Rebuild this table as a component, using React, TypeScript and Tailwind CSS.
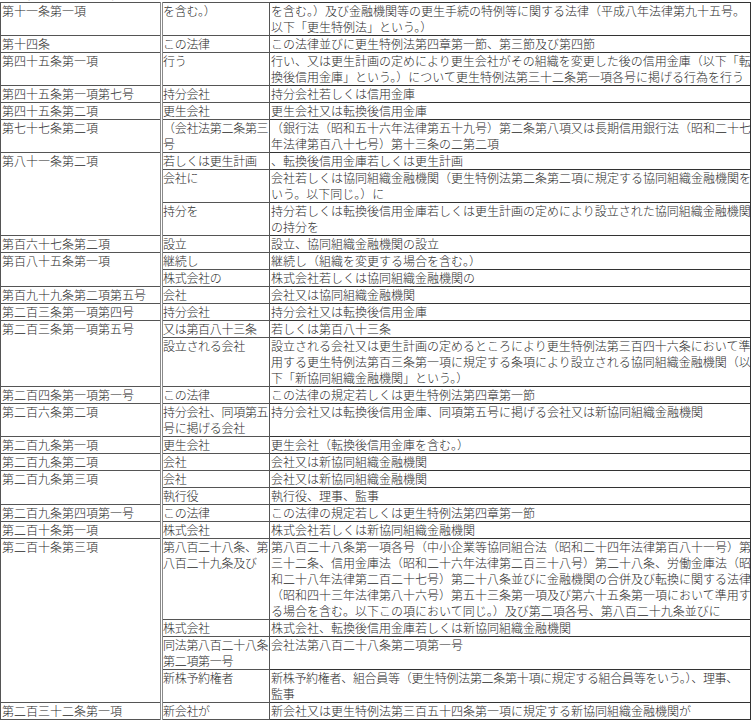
import React from "react";

type Row = { a?: string; span?: number; b: string[]; c: string[] };

const rows: Row[] = [
  { a: "第十一条第一項", b: ["を含む。）"], c: ["を含む。）及び金融機関等の更生手続の特例等に関する法律（平成八年法律第九十五号。", "以下「更生特例法」という。）"] },
  { a: "第十四条", b: ["この法律"], c: ["この法律並びに更生特例法第四章第一節、第三節及び第四節"] },
  { a: "第四十五条第一項", b: ["行う"], c: ["行い、又は更生計画の定めにより更生会社がその組織を変更した後の信用金庫（以下「転", "換後信用金庫」という。）について更生特例法第三十二条第一項各号に掲げる行為を行う"] },
  { a: "第四十五条第一項第七号", b: ["持分会社"], c: ["持分会社若しくは信用金庫"] },
  { a: "第四十五条第二項", b: ["更生会社"], c: ["更生会社又は転換後信用金庫"] },
  { a: "第七十七条第二項", b: ["（会社法第二条第三", "号"], c: ["（銀行法（昭和五十六年法律第五十九号）第二条第八項又は長期信用銀行法（昭和二十七", "年法律第百八十七号）第十三条の二第二項"] },
  { a: "第八十一条第二項", span: 3, b: ["若しくは更生計画"], c: ["、転換後信用金庫若しくは更生計画"] },
  { b: ["会社に"], c: ["会社若しくは協同組織金融機関（更生特例法第二条第二項に規定する協同組織金融機関を", "いう。以下同じ。）に"] },
  { b: ["持分を"], c: ["持分若しくは転換後信用金庫若しくは更生計画の定めにより設立された協同組織金融機関", "の持分を"] },
  { a: "第百六十七条第二項", b: ["設立"], c: ["設立、協同組織金融機関の設立"] },
  { a: "第百八十五条第一項", span: 2, b: ["継続し"], c: ["継続し（組織を変更する場合を含む。）"] },
  { b: ["株式会社の"], c: ["株式会社若しくは協同組織金融機関の"] },
  { a: "第百九十九条第二項第五号", b: ["会社"], c: ["会社又は協同組織金融機関"] },
  { a: "第二百三条第一項第四号", b: ["持分会社"], c: ["持分会社又は転換後信用金庫"] },
  { a: "第二百三条第一項第五号", span: 2, b: ["又は第百八十三条"], c: ["若しくは第百八十三条"] },
  { b: ["設立される会社"], c: ["設立される会社又は更生計画の定めるところにより更生特例法第三百四十六条において準", "用する更生特例法第百三条第一項に規定する条項により設立される協同組織金融機関（以", "下「新協同組織金融機関」という。）"] },
  { a: "第二百四条第一項第一号", b: ["この法律"], c: ["この法律の規定若しくは更生特例法第四章第一節"] },
  { a: "第二百六条第二項", b: ["持分会社、同項第五", "号に掲げる会社"], c: ["持分会社又は転換後信用金庫、同項第五号に掲げる会社又は新協同組織金融機関"] },
  { a: "第二百九条第一項", b: ["更生会社"], c: ["更生会社（転換後信用金庫を含む。）"] },
  { a: "第二百九条第二項", b: ["会社"], c: ["会社又は新協同組織金融機関"] },
  { a: "第二百九条第三項", span: 2, b: ["会社"], c: ["会社又は新協同組織金融機関"] },
  { b: ["執行役"], c: ["執行役、理事、監事"] },
  { a: "第二百九条第四項第一号", b: ["この法律"], c: ["この法律の規定若しくは更生特例法第四章第一節"] },
  { a: "第二百十条第一項", b: ["株式会社"], c: ["株式会社若しくは新協同組織金融機関"] },
  { a: "第二百十条第三項", span: 4, b: ["第八百二十八条、第", "八百二十九条及び"], c: ["第八百二十八条第一項各号（中小企業等協同組合法（昭和二十四年法律第百八十一号）第", "三十二条、信用金庫法（昭和二十六年法律第二百三十八号）第二十八条、労働金庫法（昭", "和二十八年法律第二百二十七号）第二十八条並びに金融機関の合併及び転換に関する法律", "（昭和四十三年法律第八十六号）第五十三条第一項及び第六十五条第一項において準用す", "る場合を含む。以下この項において同じ。）及び第二項各号、第八百二十九条並びに"] },
  { b: ["株式会社"], c: ["株式会社、転換後信用金庫若しくは新協同組織金融機関"] },
  { b: ["同法第八百二十八条", "第二項第一号"], c: ["会社法第八百二十八条第二項第一号"] },
  { b: ["新株予約権者"], c: ["新株予約権者、組合員等（更生特例法第二条第十項に規定する組合員等をいう。）、理事、", "監事"] },
  { a: "第二百三十二条第一項", b: ["新会社が"], c: ["新会社又は更生特例法第三百五十四条第一項に規定する新協同組織金融機関が"] },
];

function Lines({ lines, tight }: { lines: string[]; tight?: boolean }) {
  return (
    <>
      {lines.map((l, i) => (
        <div key={i} className={tight ? "whitespace-nowrap tracking-[-0.3px]" : "whitespace-nowrap"}>
          {l}
        </div>
      ))}
    </>
  );
}

export default function App() {
  return (
    <div
      className="bg-white text-[#2a2a2a] text-[12px] leading-[16px] w-[753px] h-[722px] overflow-hidden"
      style={{ fontFamily: '"Noto Sans CJK JP", "Noto Sans", sans-serif' }}
    >
      <div className="h-[2px] overflow-hidden flex items-end pl-[2px]">
        <div className="whitespace-nowrap">（会社法の規定の読替え）</div>
      </div>
      <table className="table-fixed border-collapse w-[751px] font-light">
        <colgroup>
          <col className="w-[161px]" />
          <col className="w-[108px]" />
          <col />
        </colgroup>
        <tbody>
          {rows.map((r, i) => (
            <tr key={i}>
              {r.a !== undefined && (
                <td
                  rowSpan={r.span ?? 1}
                  className="align-top p-0 pl-[1px] border border-[#555] border-r-[3px] border-r-[#8a8a8a] border-double"
                >
                  <Lines lines={[r.a]} />
                </td>
              )}
              <td className="align-top p-0 border border-[#555]">
                <Lines lines={r.b} tight />
              </td>
              <td className="align-top p-0 pl-[1px] border border-[#333]">
                <Lines lines={r.c} tight={r.c.some((l) => l.length > 40)} />
              </td>
            </tr>
          ))}
        </tbody>
      </table>
    </div>
  );
}
